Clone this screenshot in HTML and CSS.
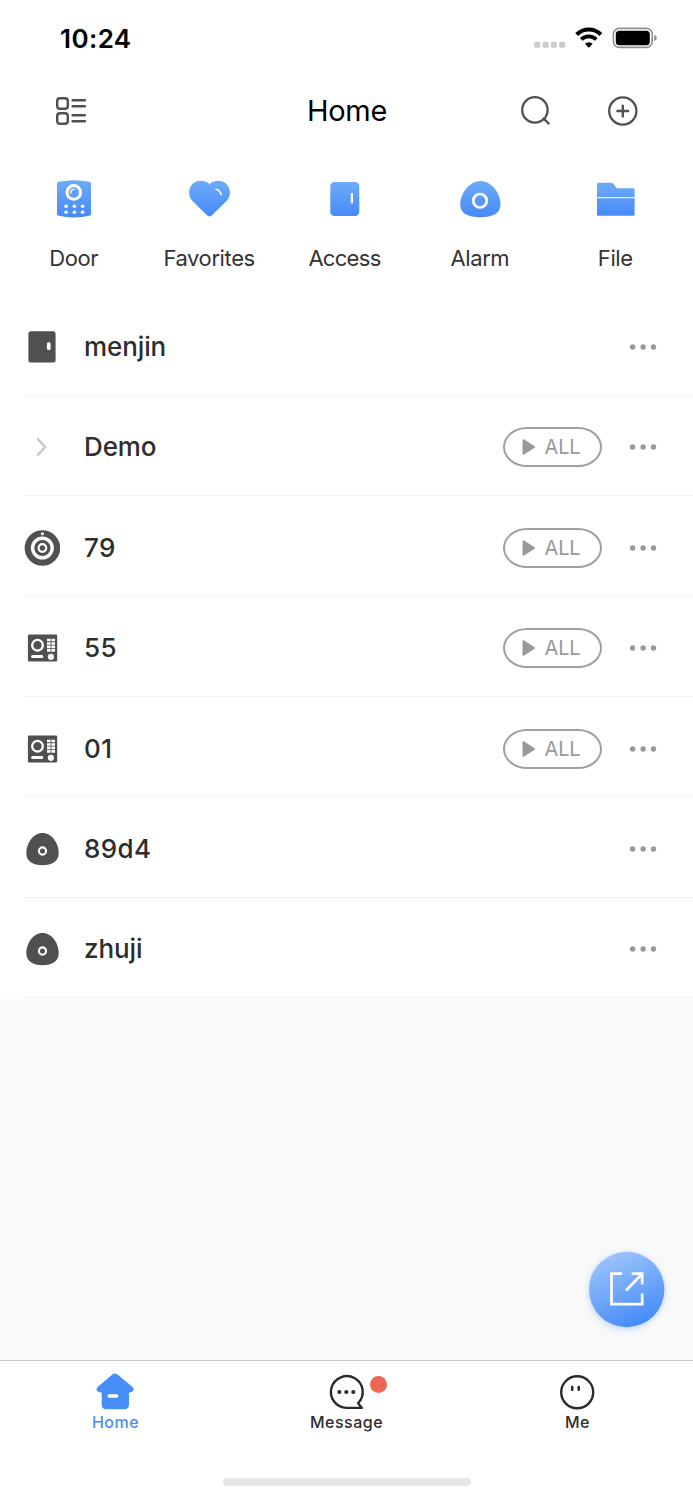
FILE: index.html
```html
<!DOCTYPE html>
<html lang="en">
<head>
<meta charset="utf-8">
<title>Home</title>
<link rel="stylesheet" href="styles.css">
</head>
<body>
<svg class="defs" width="0" height="0" aria-hidden="true">
  <defs>
    <linearGradient id="blue" x1="0" y1="0" x2="0" y2="1"><stop offset="0" stop-color="#6eabfa"/><stop offset="1" stop-color="#458af7"/></linearGradient>
    <linearGradient id="fab" x1="0.25" y1="0" x2="0.65" y2="1"><stop offset="0" stop-color="#9fc6fa"/><stop offset="1" stop-color="#438af8"/></linearGradient>
    <symbol id="panel" viewBox="0 0 36 36">
      <rect x="3.900" y="4.500" width="29.300" height="27" rx="1.200" fill="#505050"/>
      <circle cx="13.500" cy="15.200" r="5.300" fill="none" stroke="#fff" stroke-width="2.300"/>
      <path d="M8.600 26.400H17.800" stroke="#fff" stroke-width="3" stroke-linecap="round"/>
      <circle cx="26.900" cy="26.800" r="3.100" fill="#fff"/>
      <path d="M23 10h8M23 13.500h8M23 16.900h8M23 20.300h8" stroke="#fff" stroke-width="2.700"/>
      <path d="M27 8v14" stroke="#505050" stroke-width=".8"/>
    </symbol>
    <symbol id="host" viewBox="0 0 36 36">
      <path d="M18.500 2C28 2 34.700 12.500 34.700 22.200C34.700 30.200 28 34.200 18.500 34.200S2.300 30.200 2.300 22.200C2.300 12.500 9 2 18.500 2Z" fill="#505050"/>
      <circle cx="18.500" cy="20" r="3.600" fill="none" stroke="#fff" stroke-width="2.100"/>
    </symbol>
    <symbol id="more" viewBox="0 0 28 8"><g fill="#999"><circle cx="3.600" cy="4" r="2.700"/><circle cx="14.100" cy="4" r="2.700"/><circle cx="24.500" cy="4" r="2.700"/></g></symbol>
    <symbol id="play" viewBox="0 0 14 18"><path d="M1.300 2L12.200 9L1.300 16Z" fill="#999" stroke="#999" stroke-width="1.600" stroke-linejoin="round"/></symbol>
  </defs>
</svg>
<div class="screen">
  <header class="status">
    <span class="time">10:24</span>
    <svg class="status-icons" width="126" height="24" viewBox="532 26 126 24">
      <g fill="#cbcbcb"><rect x="534.300" y="41.800" width="6" height="6" rx="1.500"/><rect x="542.600" y="41.800" width="6" height="6" rx="1.500"/><rect x="550.900" y="41.800" width="6" height="6" rx="1.500"/><rect x="559.200" y="41.800" width="6" height="6" rx="1.500"/></g>
      <g fill="none" stroke="#000"><path d="M576.700 34.500a17 17 0 0 1 24.200 0" stroke-width="4"/><path d="M581.300 39.400a10.700 10.700 0 0 1 15 0" stroke-width="3.900"/></g>
      <path d="M588.800 47.700L584.900 43.800Q588.800 40.600 592.700 43.800Z"/>
      <rect x="613.400" y="28.400" width="38.800" height="19" rx="5.800" fill="none" stroke="#8f8f8f" stroke-width="1.600"/>
      <rect x="615.800" y="30.700" width="34" height="14.500" rx="3.500"/>
      <path d="M654.200 34.700q2.600 1 2.600 3.200t-2.600 3.200z" fill="#8f8f8f"/>
    </svg>
  </header>
  <nav class="nav">
    <svg width="32" height="30" viewBox="55 96 32 30" fill="none" stroke="#505050" stroke-width="2.400">
      <rect x="57.200" y="98.200" width="10.600" height="10.600" rx="2.800"/><rect x="57.200" y="113.200" width="10.600" height="10.600" rx="2.800"/>
      <path d="M72.600 100.200H84.900M72.600 106.200H84.900M72.600 115.200H84.900M72.600 121.200H84.900" stroke-linecap="round"/>
    </svg>
    <h1 class="title">Home</h1>
    <div class="nav-actions">
      <svg width="32" height="32" viewBox="520 95 32 32" fill="none" stroke="#505050" stroke-width="2.300"><circle cx="534.900" cy="109.900" r="12.700"/><path d="M543.800 118.600L548.600 123.500" stroke-linecap="round" stroke-width="2.400"/></svg>
      <svg width="32" height="32" viewBox="607 95 32 32" fill="none" stroke="#505050" stroke-width="2.300"><circle cx="622.800" cy="111" r="13.600"/><path d="M617.400 111H628.200M622.800 105.600V116.400" stroke-linecap="round" stroke-width="2.400"/></svg>
    </div>
  </nav>
  <section class="shortcuts">
    <div class="shortcut"><svg width="44" height="40" viewBox="52 179 44 40"><path d="M57 183.500Q57 182.200 58.500 181.800Q74 178.500 89.500 181.800Q91 182.200 91 183.500V214Q91 215.300 89.500 215.700Q74 219.100 58.500 215.700Q57 215.300 57 214Z" fill="url(#blue)"/><circle cx="73.800" cy="192.400" r="6.800" fill="none" stroke="#fff" stroke-width="3"/><path d="M70.700 193Q70.600 189.600 74 189.200" fill="none" stroke="#fff" stroke-width="1.500" stroke-linecap="round"/><g fill="#fff"><circle cx="66.100" cy="206.300" r="1.800"/><circle cx="74.400" cy="206.300" r="1.800"/><circle cx="82.600" cy="206.300" r="1.800"/><circle cx="66.100" cy="212.300" r="1.800"/><circle cx="74.400" cy="212.300" r="1.800"/><circle cx="82.600" cy="212.300" r="1.800"/></g></svg><span>Door</span></div>
    <div class="shortcut"><svg width="44" height="40" viewBox="187 179 44 40"><path d="M209.500 184C205 180 198 179.800 193.300 183.300C188 187.500 187.800 196 192.200 200.800L207.600 215.700Q209.500 217.300 211.400 215.700L226.800 200.800C231.200 196 231 187.500 225.700 183.300C221 179.800 214 180 209.500 184Z" fill="url(#blue)"/><path d="M216 189.200Q220 190 221 194.500" fill="none" stroke="#fff" stroke-width="1.600" stroke-linecap="round"/></svg><span>Favorites</span></div>
    <div class="shortcut"><svg width="44" height="40" viewBox="322 179 44 40"><rect x="330.300" y="181.900" width="29" height="34" rx="4.200" fill="url(#blue)"/><rect x="350.800" y="193" width="2.200" height="10.300" fill="#fff"/></svg><span class="tight">Access</span></div>
    <div class="shortcut"><svg width="44" height="40" viewBox="458 179 44 40"><path d="M480.300 181C491.500 181 500.500 193 500.500 204.500C500.500 213.500 492.500 217.300 480.300 217.300S460.200 213.500 460.200 204.500C460.200 193 469.500 181 480.300 181Z" fill="url(#blue)"/><circle cx="480" cy="200.700" r="6.700" fill="none" stroke="#fff" stroke-width="2.700"/></svg><span>Alarm</span></div>
    <div class="shortcut"><svg width="44" height="40" viewBox="593 179 44 40"><path d="M598.300 182.800H611.500Q612.700 182.800 613.400 183.800L616.500 188.200H633.300Q634.600 188.200 634.600 189.500V214.500Q634.600 215.800 633.300 215.800H598.300Q597 215.800 597 214.500V184Q597 182.800 598.300 182.800Z" fill="url(#blue)"/><path d="M597 197.600H635" stroke="#e9f2ff" stroke-width="1.400"/></svg><span>File</span></div>
  </section>
  <main class="list">
    <div class="row"><svg class="row-icon" viewBox="0 0 36 36"><rect x="4.400" y="2.300" width="27.200" height="31.200" rx="2.600" fill="#505050"/><rect x="22.900" y="13.200" width="3.700" height="7.800" rx="1.600" fill="#fff"/></svg><span class="name">menjin</span><svg class="more"><use href="#more"/></svg></div>
    <div class="row"><svg class="row-icon" viewBox="0 0 36 36"><path d="M13.900 10.300L21.300 18L13.900 25.700" fill="none" stroke="#c4c4c4" stroke-width="2.300" stroke-linecap="round" stroke-linejoin="round"/></svg><span class="name">Demo</span><button class="all"><svg width="14" height="18"><use href="#play"/></svg>ALL</button><svg class="more"><use href="#more"/></svg></div>
    <div class="row"><svg class="row-icon" viewBox="-0.4 0 36 36"><circle cx="18" cy="18" r="17.800" fill="#505050"/><g fill="none" stroke="#fff"><circle cx="18" cy="18" r="9.800" stroke-width="3.400"/><circle cx="18" cy="18" r="3.800" stroke-width="2.200"/></g><ellipse cx="18" cy="17.700" rx="2.600" ry="1.700" fill="#505050"/><circle cx="18" cy="3.700" r="1.500" fill="#fff"/></svg><span class="name digits">79</span><button class="all"><svg width="14" height="18"><use href="#play"/></svg>ALL</button><svg class="more"><use href="#more"/></svg></div>
    <div class="row"><svg class="row-icon"><use href="#panel"/></svg><span class="name digits">55</span><button class="all"><svg width="14" height="18"><use href="#play"/></svg>ALL</button><svg class="more"><use href="#more"/></svg></div>
    <div class="row"><svg class="row-icon"><use href="#panel"/></svg><span class="name digits">01</span><button class="all"><svg width="14" height="18"><use href="#play"/></svg>ALL</button><svg class="more"><use href="#more"/></svg></div>
    <div class="row"><svg class="row-icon"><use href="#host"/></svg><span class="name digits">89d4</span><svg class="more"><use href="#more"/></svg></div>
    <div class="row"><svg class="row-icon"><use href="#host"/></svg><span class="name">zhuji</span><svg class="more"><use href="#more"/></svg></div>
  </main>
  <button class="fab" aria-label="Open"><svg width="77" height="77" viewBox="588 1251 77 77"><circle cx="626.700" cy="1289.500" r="37.700" fill="url(#fab)"/><g fill="none" stroke="#fff" stroke-width="2.700" stroke-linecap="round"><path d="M621 1273.700H611.500V1304.200H642.200V1294.500"/><path d="M632.800 1273.700H642.200V1283.200M642 1274L626.700 1289.800"/></g></svg></button>
  <footer class="tabs">
    <div class="tab active"><svg width="40" height="40" viewBox="96 1372 40 40"><path d="M112.700 1374.300Q115 1372.700 117.300 1374.300L132.500 1387Q134.600 1389 133 1391Q132 1392.200 129 1392.700V1404.500Q129 1409.200 124.300 1409.200H106.300Q101.700 1409.200 101.700 1404.500V1392.700Q98.500 1392.200 97.300 1391Q95.700 1389 97.600 1387Z" fill="#478ef8"/><path d="M109.300 1396H116.700" stroke="#fff" stroke-width="3.600" stroke-linecap="round"/></svg><span>Home</span></div>
    <div class="tab"><svg width="40" height="40" viewBox="326.400 1372 40 40"><path d="M347 1407.900A15.900 15.900 0 1 1 358.500 1403.200L362.300 1407.900Z" fill="none" stroke="#2b2b2b" stroke-width="2.400" stroke-linejoin="round"/><g fill="#2b2b2b"><circle cx="339.800" cy="1392" r="2.100"/><circle cx="346.700" cy="1392" r="2.100"/><circle cx="353.700" cy="1392" r="2.100"/></g></svg><span>Message</span><i class="badge"></i></div>
    <div class="tab"><svg width="40" height="40" viewBox="558 1372 40 40" fill="none" stroke="#2b2b2b"><circle cx="577.200" cy="1392.300" r="16" stroke-width="2.400"/><path d="M572.200 1387V1389.700M578.700 1387V1389.700" stroke-width="2.600" stroke-linecap="round"/></svg><span>Me</span></div>
    <div class="home-bar"></div>
  </footer>
</div>
</body>
</html>
```
FILE: styles.css
```css
* { box-sizing: border-box; }
body { margin: 0; background: #f9f9f9; font-family: Inter, "Liberation Sans", sans-serif; color: #2d2d2d; }
svg { display: block; flex: none; }
button { font: inherit; border: 0; padding: 0; background: none; }
.defs { position: absolute; }
.screen { position: relative; width: 693px; height: 1500px; display: flex; flex-direction: column; overflow: hidden; }
.status { height: 76px; padding: 0 35px 0 60px; display: flex; align-items: center; justify-content: space-between; background: #fff; }
.time { padding-top: 2px; font-size: 26px; font-weight: 600; color: #000; letter-spacing: .4px; line-height: 74px; }
.nav { height: 70px; padding: 0 54px 0 55px; background: #fff; display: grid; grid-template-columns: 1fr auto 1fr; align-items: center; }
.title { margin: 0; font-size: 29px; font-weight: 400; color: #000; line-height: 70px; letter-spacing: -.3px; }
.nav-actions { display: flex; gap: 55px; justify-content: flex-end; }
.shortcuts { height: 150.300px; padding: 33px 9.600px 0 6px; background: #fff; display: grid; grid-template-columns: repeat(5, 135.400px); }
.shortcut { display: flex; flex-direction: column; align-items: center; font-size: 22px; line-height: 28px; gap: 25px; color: #333; letter-spacing: -.4px; }
.tight { letter-spacing: -.7px; }
.list { background: #fff; }
.row { height: 100.400px; padding-top: 1px; display: flex; align-items: center; margin-left: 24px; padding-right: 36px; background: linear-gradient(#f2f2f2, #f2f2f2) 0 calc(100% - 1px) / 100% 1px no-repeat; }
.row-icon { width: 36px; height: 36px; margin-right: 24px; }
.name { flex: 1; font-size: 26px; font-weight: 500; line-height: 36px; letter-spacing: -.1px; }
.digits { letter-spacing: .4px; }
.all { width: 99px; height: 40px; margin-right: 27.500px; padding-right: 2px; border: 2px solid #9f9f9f; border-radius: 24px / 20px; display: flex; align-items: center; justify-content: center; gap: 9px; color: #999; font-size: 20px; font-weight: 400; letter-spacing: -.2px; }
.more { width: 28px; height: 8px; }
.fab { position: absolute; left: 589px; top: 1252px; width: 75px; height: 75px; border-radius: 50%; box-shadow: 0 2px 7px rgba(70, 140, 248, .35); }
.fab svg { margin: -1px; }
.tabs { margin-top: auto; height: 140px; border-top: 1px solid #c9c9c9; background: #fff; display: grid; grid-template-columns: repeat(3, 231px); grid-template-rows: 110px 1fr; justify-items: center; }
.tab { position: relative; padding-top: 11px; display: flex; flex-direction: column; align-items: center; font-size: 16px; line-height: 20px; font-weight: 500; letter-spacing: .5px; }
.tab.active { color: #478ef8; }
.badge { position: absolute; left: 60px; top: 15px; width: 17px; height: 17px; border-radius: 50%; background: #ed6650; }
.home-bar { grid-column: 1 / -1; margin-top: 7px; width: 248px; height: 8px; border-radius: 4px; background: #e6e6e6; }
```
